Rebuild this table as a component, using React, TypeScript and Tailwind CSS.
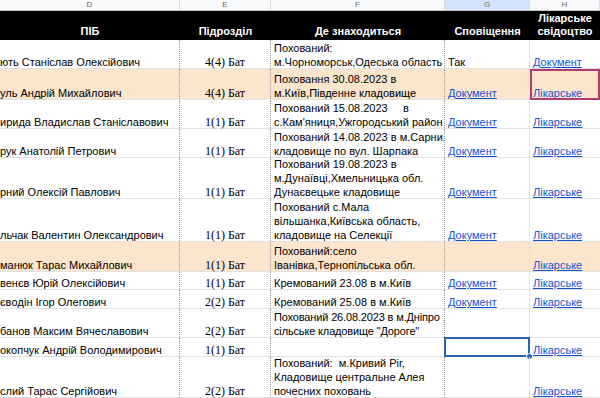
import React from 'react';

interface Row {
    name: string;
    unit: string;
    place: string[];
    notice?: string;
    noticeLink?: boolean;
    cert?: string;
    h: number;
    orange?: boolean;
    certMarked?: boolean;
    noticeSelected?: boolean;
    tight?: boolean;
}

const rows: Row[] = [
    { name: 'ють Станіслав Олексійович', unit: '4(4) Бат', place: ['Похований:', 'м.Чорноморськ,Одеська область'], notice: 'Так', cert: 'Документ', h: 29 },
    { name: 'уль Андрій Михайлович', unit: '4(4) Бат', place: ['Поховання 30.08.2023 в', 'м.Київ,Південне кладовище'], notice: 'Документ', noticeLink: true, cert: 'Лікарське', h: 31, orange: true, certMarked: true },
    { name: 'ирида Владислав Станіславович', unit: '1(1) Бат', place: ['Похований 15.08.2023     в', "с.Кам'яниця,Ужгородський район"], notice: 'Документ', noticeLink: true, cert: 'Лікарське', h: 29 },
    { name: 'рук Анатолій Петрович', unit: '1(1) Бат', place: ['Похований 14.08.2023 в м.Сарни,', 'кладовище по вул. Шарпака'], notice: 'Документ', noticeLink: true, cert: 'Лікарське', h: 29 },
    { name: 'рний Олексій Павлович', unit: '1(1) Бат', place: ['Похований 19.08.2023 в', 'м.Дунаївці,Хмельницька обл.', 'Дунаєвецьке кладовище'], notice: 'Документ', noticeLink: true, cert: 'Лікарське', h: 41 },
    { name: 'льчак Валентин Олександрович', unit: '1(1) Бат', place: ['Похований с.Мала', 'вільшанка,Київська область,', 'кладовище на Селекції'], notice: 'Документ', noticeLink: true, cert: 'Лікарське', h: 43 },
    { name: 'манюк Тарас Михайлович', unit: '1(1) Бат', place: ['Похований:село', 'Іванівка,Тернопільська обл.'], cert: 'Лікарське', h: 30, orange: true },
    { name: 'венєв Юрій Олексійович', unit: '1(1) Бат', place: ['Кремований 23.08 в м.Київ'], notice: 'Документ', noticeLink: true, cert: 'Лікарське', h: 18 },
    { name: 'євoдін Ігор Олегович', unit: '2(2) Бат', place: ['Кремований 25.08 в м.Київ'], notice: 'Документ', noticeLink: true, cert: 'Лікарське', h: 19 },
    { name: 'банов Максим Вячеславович', unit: '2(2) Бат', place: ['Похований 26.08.2023 в м.Дніпро ,', 'сільське кладовище "Дороге"'], h: 29, tight: true },
    { name: 'окопчук Андрій Володимирович', unit: '1(1) Бат', place: [], cert: 'Лікарське', h: 19, noticeSelected: true },
    { name: 'слий Тарас Сергійович', unit: '2(2) Бат', place: ['Похований:  м.Кривий Ріг,', 'Кладовище центральне Алея', 'почесних поховань'], cert: 'Лікарське', h: 41 },
];

const cols = 'grid grid-cols-[196px_91px_174px_85px_70px]';
const sans = { fontFamily: '"Liberation Sans", Arial, sans-serif' };

function Link({ children }: { children: React.ReactNode }) {
    return <span className="text-[#1155cc] underline underline-offset-[1px]">{children}</span>;
}

export default function App() {
    return (
        <div className="w-[600px] h-[398px] overflow-hidden bg-white text-[11px] text-black" style={sans}>
            <div className="ml-[-16px] w-[616px]">
                {/* column letters */}
                <div className={`${cols} h-[11px] bg-[#f8f9fa] border-b border-[#c4c7c5] text-[8px] text-[#6b6b6b]`}>
                    {['D', 'E', 'F', 'G', 'H'].map((l, i) => (
                        <div
                            key={l}
                            className={`flex items-center justify-center leading-[10px] border-r border-[#dadce0] ${i === 0 ? 'pl-[16px]' : ''} ${l === 'G' ? 'bg-[#d3e3fd]' : ''}`}
                        >
                            {l}
                        </div>
                    ))}
                </div>

                {/* header */}
                <div className={`${cols} h-[29px] bg-black text-white font-bold leading-[13px]`}>
                    <div className="flex items-end justify-center pb-[2px] pl-[16px]">ПІБ</div>
                    <div className="flex items-end justify-center pb-[2px]">Підрозділ</div>
                    <div className="flex items-end justify-center pb-[2px]">Де знаходиться</div>
                    <div className="flex items-end justify-center pb-[2px]">Сповіщення</div>
                    <div className="flex items-end justify-center pb-[2px] text-center">
                        Лікарське
                        <br />
                        свідоцтво
                    </div>
                </div>

                {rows.map((r, i) => (
                    <div
                        key={i}
                        className={`${cols} border-b border-[#e2e2e2] ${r.orange ? 'bg-[#fce5cd]' : 'bg-white'}`}
                        style={{ height: r.h }}
                    >
                        <div className="flex items-end pl-[16px] leading-[14px] whitespace-nowrap overflow-hidden border-r border-dotted border-[#9a9a9a]">
                            <span className="relative top-[1px]">{r.name}</span>
                        </div>
                        <div
                            className="flex items-end justify-center text-[12px] leading-[14px] border-r border-dotted border-[#9a9a9a]"
                            style={{ fontFamily: '"Liberation Serif", "Times New Roman", serif' }}
                        >
                            <span className="relative top-[1px]">{r.unit}</span>
                        </div>
                        <div
                            className={`flex flex-col justify-end px-[3px] leading-[14px] whitespace-pre overflow-hidden border-r border-dotted border-[#9a9a9a] ${r.tight ? 'tracking-[-0.15px]' : ''}`}
                        >
                            {r.place.map((p, j) => (
                                <div key={j} className="relative top-[1px]">{p}</div>
                            ))}
                        </div>
                        <div className="relative flex items-end px-[3px] leading-[14px] border-r border-[#e2e2e2]">
                            {r.notice && (
                                <span className="relative top-[1px]">
                                    {r.noticeLink ? <Link>{r.notice}</Link> : r.notice}
                                </span>
                            )}
                            {r.noticeSelected && (
                                <div className="absolute inset-[-1px] border-2 border-[#2b63b8]">
                                    <div className="absolute right-[-5px] bottom-[-5px] w-[7px] h-[7px] rounded-full bg-[#2b63b8] border border-white" />
                                </div>
                            )}
                        </div>
                        <div className="relative flex items-end px-[3px] leading-[14px]">
                            {r.cert && (
                                <span className="relative top-[1px]">
                                    <Link>{r.cert}</Link>
                                </span>
                            )}
                            {r.certMarked && <div className="absolute inset-x-0 top-0 bottom-[-1px] border-2 border-[#b13a70]" />}
                        </div>
                    </div>
                ))}
            </div>
        </div>
    );
}
